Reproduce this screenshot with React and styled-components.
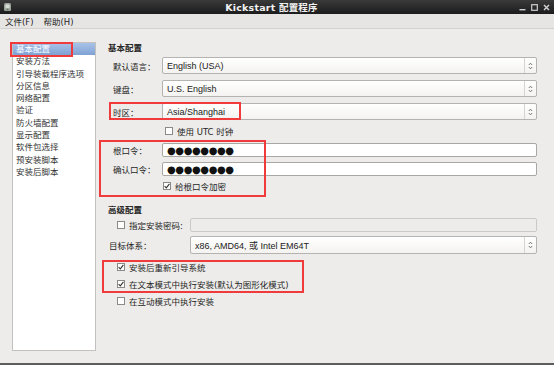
import styled, { createGlobalStyle } from "styled-components"

const Global = createGlobalStyle`
    html, body {
        margin: 0;
        padding: 0;
        background: #edecea;
    }
    * {
        box-sizing: border-box;
    }
`

const FONT = `"DejaVu Sans", "Noto Sans CJK SC", sans-serif`

const menuItems = [
    "基本配置", "安装方法", "引导装载程序选项", "分区信息", "网络配置", "验证",
    "防火墙配置", "显示配置", "软件包选择", "预安装脚本", "安装后脚本",
]

const Window = styled.div`
    position: relative;
    width: 554px;
    height: 365px;
    display: flex;
    flex-direction: column;
    background: #edecea;
    font-family: ${FONT};
    font-size: 8.5px;
    color: #262626;
    overflow: hidden;
    border-bottom: 2px solid #5c5c5c;
`

const TitleBar = styled.div`
    height: 14px;
    display: flex;
    align-items: center;
    padding: 0 4px 0 3px;
    background: linear-gradient(#3a3a3a, #1c1c1c);
    color: #f2f2f2;
`

const Title = styled.div`
    flex: 1;
    text-align: center;
    font-weight: bold;
    font-size: 9.5px;
    padding-left: 12px;
    letter-spacing: 0.2px;
`

const Controls = styled.div`
    display: flex;
    gap: 5px;
    align-items: center;
`

const MenuBar = styled.div`
    height: 15px;
    display: flex;
    align-items: center;
    gap: 10px;
    padding-left: 5px;
    background: #e6e5e3;
    border-bottom: 1px solid #d3d2cf;
    font-size: 8.5px;
`

const Body = styled.div`
    flex: 1;
    display: flex;
    padding: 13px 0 0 12px;
`

const List = styled.div`
    width: 84px;
    height: 309px;
    background: #fff;
    border: 1px solid #c3c1bd;
    display: flex;
    flex-direction: column;
`

const ListItem = styled.div`
    height: 12.3px;
    line-height: 12.3px;
    padding-left: 3px;
    white-space: nowrap;
    color: ${(p) => (p.$active ? "#fff" : "#333")};
    background: ${(p) => (p.$active ? "linear-gradient(#a9c3e8, #7fa2d4)" : "transparent")};
`

const Panel = styled.div`
    flex: 1;
    display: flex;
    flex-direction: column;
    padding: 0 17px 0 4px;
`

const Heading = styled.div`
    height: 12px;
    line-height: 12px;
    padding-left: 8px;
    font-weight: bold;
    margin-top: ${(p) => p.$top || 0}px;
`

const Row = styled.div`
    display: flex;
    align-items: center;
    height: ${(p) => p.$h}px;
    margin-top: ${(p) => p.$top}px;
`

const Label = styled.div`
    width: ${(p) => p.$w}px;
    padding-left: ${(p) => p.$pad}px;
    white-space: nowrap;
`

const Select = styled.div`
    flex: 1;
    height: 100%;
    display: flex;
    align-items: center;
    border: 1px solid #b5b3b0;
    border-radius: 2px;
    background: linear-gradient(#ffffff, #f4f3f1);
    padding-left: 4px;
    font-family: "Liberation Sans", "Noto Sans CJK SC", sans-serif;
    font-size: 9px;
    color: #222;
`

const SelectText = styled.span`
    flex: 1;
`

const Arrow = styled.span`
    width: 12px;
    height: 100%;
    display: flex;
    align-items: center;
    justify-content: center;
    border-left: 1px solid #d6d4d1;
`

const Entry = styled.div`
    flex: 1;
    height: 100%;
    display: flex;
    align-items: center;
    background: ${(p) => (p.$disabled ? "#edecea" : "#fff")};
    border: 1px solid ${(p) => (p.$disabled ? "#cbc9c5" : "#a9a7a4")};
    border-radius: 2px;
    padding-left: 4px;
`

const Dots = styled.span`
    font-size: 10px;
    letter-spacing: -0.4px;
    color: #111;
    font-family: "DejaVu Sans", sans-serif;
`

const Check = styled.span`
    width: 8px;
    height: 8px;
    border: 1px solid #8c8a87;
    background: #fff;
    display: inline-flex;
    align-items: center;
    justify-content: center;
    margin-right: 4px;
    flex-shrink: 0;
`

const CheckRow = styled.div`
    display: flex;
    align-items: center;
    height: 12px;
    margin-top: ${(p) => p.$top}px;
    padding-left: ${(p) => p.$indent}px;
    white-space: nowrap;
`

const Mark = styled.div`
    position: absolute;
    left: ${(p) => p.$x}px;
    top: ${(p) => p.$y}px;
    width: ${(p) => p.$w}px;
    height: ${(p) => p.$h}px;
    border: 2px solid #ef3b3b;
    pointer-events: none;
`

const Box = ({ checked }) => (
    <Check>
        {checked && (
            <svg width="6" height="6" viewBox="0 0 6 6">
                <path d="M0.6 3.2 L2.3 4.9 L5.4 0.9" stroke="#333" strokeWidth="1.1" fill="none" />
            </svg>
        )}
    </Check>
)

const Spin = () => (
    <Arrow>
        <svg width="5" height="8" viewBox="0 0 5 8">
            <path d="M0.8 3 L2.5 1.2 L4.2 3 M0.8 5 L2.5 6.8 L4.2 5" stroke="#666" strokeWidth="0.9" fill="none" />
        </svg>
    </Arrow>
)

const AppIcon = () => (
    <svg width="9" height="10" viewBox="0 0 9 10">
        <rect x="1" y="1" width="7" height="8" rx="1.5" fill="#9aa39a" />
        <rect x="2.5" y="2.5" width="4" height="4" rx="1" fill="#d8ddd6" />
        <rect x="3.5" y="6.5" width="2" height="2" fill="#6c786c" />
    </svg>
)

const WinButtons = () => (
    <Controls>
        <svg width="7" height="7" viewBox="0 0 7 7">
            <rect x="0.5" y="5" width="6" height="1.4" fill="#cfcfcf" />
        </svg>
        <svg width="7" height="7" viewBox="0 0 7 7">
            <rect x="0.7" y="0.7" width="5.6" height="5.6" stroke="#cfcfcf" strokeWidth="1.2" fill="none" />
        </svg>
        <svg width="7" height="7" viewBox="0 0 7 7">
            <path d="M1 1 L6 6 M6 1 L1 6" stroke="#cfcfcf" strokeWidth="1.5" />
        </svg>
    </Controls>
)

const App = () => {
    return (
        <Window>
            <Global />
            <TitleBar>
                <AppIcon />
                <Title>Kickstart 配置程序</Title>
                <WinButtons />
            </TitleBar>
            <MenuBar>
                <span>文件(F)</span>
                <span>帮助(H)</span>
            </MenuBar>
            <Body>
                <List>
                    {menuItems.map((item, i) => (
                        <ListItem key={item} $active={i === 0}>{item}</ListItem>
                    ))}
                </List>
                <Panel>
                    <Heading>基本配置</Heading>
                    <Row $h={17} $top={3}>
                        <Label $w={62} $pad={13}>默认语言：</Label>
                        <Select><SelectText>English (USA)</SelectText><Spin /></Select>
                    </Row>
                    <Row $h={17} $top={6}>
                        <Label $w={62} $pad={13}>键盘：</Label>
                        <Select><SelectText>U.S. English</SelectText><Spin /></Select>
                    </Row>
                    <Row $h={17} $top={6}>
                        <Label $w={62} $pad={13}>时区：</Label>
                        <Select><SelectText>Asia/Shanghai</SelectText><Spin /></Select>
                    </Row>
                    <CheckRow $top={5} $indent={65}>
                        <Box />使用 UTC 时钟
                    </CheckRow>
                    <Row $h={14} $top={6}>
                        <Label $w={62} $pad={13}>根口令：</Label>
                        <Entry><Dots>●●●●●●●●</Dots></Entry>
                    </Row>
                    <Row $h={14} $top={5}>
                        <Label $w={62} $pad={13}>确认口令：</Label>
                        <Entry><Dots>●●●●●●●●</Dots></Entry>
                    </Row>
                    <CheckRow $top={4} $indent={63}>
                        <Box checked />给根口令加密
                    </CheckRow>
                    <Heading $top={12}>高级配置</Heading>
                    <Row $h={14} $top={2}>
                        <Label $w={90} $pad={17}>
                            <CheckRow $top={0} $indent={0}><Box />指定安装密码:</CheckRow>
                        </Label>
                        <Entry $disabled />
                    </Row>
                    <Row $h={18} $top={4}>
                        <Label $w={90} $pad={9}>目标体系：</Label>
                        <Select><SelectText>x86, AMD64, 或 Intel EM64T</SelectText><Spin /></Select>
                    </Row>
                    <CheckRow $top={7} $indent={17}>
                        <Box checked />安装后重新引导系统
                    </CheckRow>
                    <CheckRow $top={5} $indent={17}>
                        <Box checked />在文本模式中执行安装(默认为图形化模式)
                    </CheckRow>
                    <CheckRow $top={5} $indent={17}>
                        <Box />在互动模式中执行安装
                    </CheckRow>
                </Panel>
            </Body>
            <Mark $x={10} $y={42} $w={63} $h={15} />
            <Mark $x={109} $y={102} $w={132} $h={18} />
            <Mark $x={99} $y={140} $w={167} $h={57} />
            <Mark $x={102} $y={260} $w={202} $h={33} />
        </Window>
    )
}

export default App
